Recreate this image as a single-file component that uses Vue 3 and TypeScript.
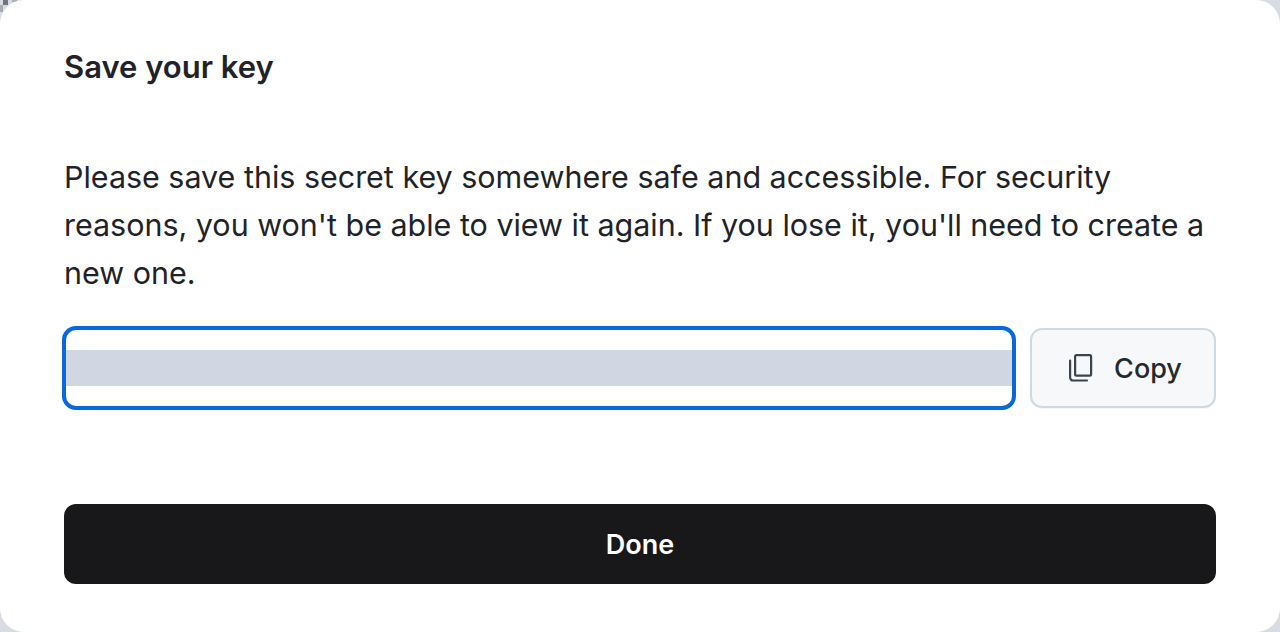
<script setup lang="ts">
const secretKey = ''
</script>

<template>
  <div class="backdrop">
    <div class="scrap" aria-hidden="true"></div>
    <section class="dialog">
      <h2 class="title">Save your key</h2>
      <p class="message">Please save this secret key somewhere safe and accessible. For security reasons, you won't be able to view it again. If you lose it, you'll need to create a new one.</p>
      <div class="key-row">
        <div class="key-field">
          <div class="key-value">{{ secretKey }}</div>
        </div>
        <button class="copy" type="button">
          <svg class="copy-icon" viewBox="0 0 28 28" fill="none" stroke="currentColor" stroke-width="2.2" stroke-linejoin="round" stroke-linecap="round">
            <rect x="8.1" y="1.1" width="16" height="20.5" rx="1.4" />
            <path d="M3.1 6.5V23.5a3 3 0 0 0 3 3H20" />
          </svg>
          <span>Copy</span>
        </button>
      </div>
      <button class="done" type="button">Done</button>
    </section>
  </div>
</template>

<style>
html, body { margin: 0; padding: 0; }
</style>

<style scoped>
.backdrop {
  position: relative;
  width: 1280px;
  height: 632px;
  background: #d8dde3;
  overflow: hidden;
  font-family: Inter, "Liberation Sans", sans-serif;
}
.scrap {
  position: absolute;
  left: 0;
  top: 0;
  width: 20px;
  height: 12px;
  background:
    linear-gradient(#6f7680, #6f7680) 3px 0 / 5px 5px no-repeat,
    linear-gradient(#aab0b8, #aab0b8) 12px 0 / 5px 2px no-repeat,
    linear-gradient(#a6acb4, #a6acb4) 0 5px / 3px 7px no-repeat;
}
.dialog {
  position: relative;
  box-sizing: border-box;
  width: 1280px;
  height: 632px;
  background: #fff;
  border-radius: 24px;
  padding: 48px 64px;
  display: flex;
  flex-direction: column;
}
.title {
  margin: 0;
  font-size: 31px;
  font-weight: 600;
  line-height: 38px;
  color: #1f2328;
}
.message {
  margin: 67px 0 0;
  font-size: 30.46px;
  line-height: 48px;
  color: #1f2328;
}
.key-row {
  display: flex;
  gap: 16px;
  margin-top: 31px;
}
.key-field {
  box-sizing: border-box;
  flex: 1;
  height: 80px;
  border: 2px solid #0969da;
  box-shadow: 0 0 0 2px #0969da;
  border-radius: 12px;
  display: flex;
  align-items: center;
  background: #fff;
}
.key-value {
  width: 100%;
  height: 36px;
  background: #d0d7e2;
}
.copy {
  box-sizing: border-box;
  width: 186px;
  height: 80px;
  display: flex;
  align-items: center;
  justify-content: center;
  gap: 19px;
  background: #f6f8fa;
  border: 2px solid #d1d9e0;
  border-radius: 12px;
  box-shadow: 0 1px 0 rgba(31, 35, 40, 0.04);
  font-family: inherit;
  font-size: 27px;
  font-weight: 500;
  color: #25292e;
  padding: 0 0 0 3px;
}
.copy-icon {
  width: 28px;
  height: 28px;
  color: #3b434c;
}
.done {
  margin-top: 96px;
  height: 80px;
  background: #18181a;
  color: #fff;
  border: none;
  border-radius: 12px;
  font-family: inherit;
  font-size: 27px;
  font-weight: 600;
}
</style>
